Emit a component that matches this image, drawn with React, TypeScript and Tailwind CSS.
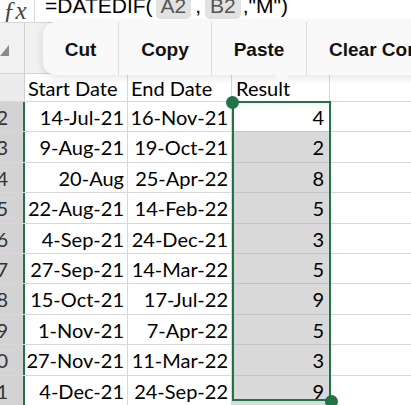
const rows = [
  { n: 2, start: "14-Jul-21", end: "16-Nov-21", result: 4 },
  { n: 3, start: "9-Aug-21", end: "19-Oct-21", result: 2 },
  { n: 4, start: "20-Aug", end: "25-Apr-22", result: 8 },
  { n: 5, start: "22-Aug-21", end: "14-Feb-22", result: 5 },
  { n: 6, start: "4-Sep-21", end: "24-Dec-21", result: 3 },
  { n: 7, start: "27-Sep-21", end: "14-Mar-22", result: 5 },
  { n: 8, start: "15-Oct-21", end: "17-Jul-22", result: 9 },
  { n: 9, start: "1-Nov-21", end: "7-Apr-22", result: 5 },
  { n: 10, start: "27-Nov-21", end: "11-Mar-22", result: 3 },
  { n: 11, start: "4-Dec-21", end: "24-Sep-22", result: 9 },
];

const menu = ["Cut", "Copy", "Paste", "Clear Contents"];

const cellFont = { fontFamily: "Lato, 'Open Sans', sans-serif" };

export default function App() {
  return (
    <div className="relative w-[411px] h-[405px] overflow-hidden bg-white text-black" style={cellFont}>
      {/* formula bar */}
      <div className="flex h-[23px] border-b border-[#d6d6d6] bg-white overflow-hidden">
        <div className="w-[35px] shrink-0 border-r border-[#d6d6d6] relative overflow-hidden">
          <span className="absolute left-[3px] top-[-8px] text-[25px] italic text-[#444]" style={{ fontFamily: "'Liberation Serif', serif" }}>
            ƒx
          </span>
        </div>
        <div className="flex items-start pl-[10px] -mt-[7px] text-[21px] leading-[26px] whitespace-nowrap" style={{ fontFamily: "'Liberation Sans', Arial, sans-serif" }}>
          <span>=DATEDIF(</span>
          <span className="ml-[3px] px-[5px] rounded-[5px] bg-[#e2e2e2] text-[#555]">A2</span>
          <span className="mx-[4px]">,</span>
          <span className="px-[5px] rounded-[5px] bg-[#e2e2e2] text-[#555]">B2</span>
          <span className="ml-[2px]">,"M")</span>
        </div>
      </div>

      {/* column letters row */}
      <div className="flex h-[51px] bg-[#f1f1f1] border-b border-[#d4d4d4]">
        <div className="w-[25px] shrink-0 border-r border-[#cfcfcf] relative">
          <div className="absolute left-0 top-[22px] w-0 h-0 border-l-[9px] border-l-transparent border-b-[11px] border-b-[#8a8a8a]" />
        </div>
        <div className="w-[103px] shrink-0 border-r border-[#d4d4d4]" />
        <div className="w-[104px] shrink-0 border-r border-[#d4d4d4]" />
        <div className="w-[98px] shrink-0 border-r border-[#d4d4d4]" />
        <div className="flex-1" />
      </div>

      {/* header row */}
      <div className="flex h-[28px] border-b border-[#d8d8d8] text-[20px] leading-[28px]">
        <div className="w-[25px] shrink-0 bg-[#ececec] border-r border-[#cfcfcf]" />
        <div className="w-[103px] shrink-0 border-r border-[#d8d8d8] pl-[3px]">Start Date</div>
        <div className="w-[104px] shrink-0 border-r border-[#d8d8d8] pl-[3px]">End Date</div>
        <div className="w-[98px] shrink-0 border-r border-[#d8d8d8] pl-[4px]">Result</div>
        <div className="flex-1" />
      </div>

      {/* data rows */}
      {rows.map((r, i) => (
        <div key={r.n} className="flex h-[30.4px] border-b border-[#d8d8d8] text-[20px] leading-[30px]">
          <div className="w-[25px] shrink-0 bg-[#d3d3d3] border-r-2 border-[#217346] flex justify-end pr-[15px] overflow-hidden text-[#333]">
            <span className="whitespace-nowrap">{r.n}</span>
          </div>
          <div className="w-[103px] shrink-0 border-r border-[#d8d8d8] text-right pr-[3px] whitespace-nowrap">{r.start}</div>
          <div className="w-[104px] shrink-0 border-r border-[#d8d8d8] text-right pr-[3px] whitespace-nowrap">{r.end}</div>
          <div
            className={
              i === 0
                ? "w-[98px] shrink-0 border-r border-[#d8d8d8] text-right pr-[5px] bg-white"
                : "w-[98px] shrink-0 border-r border-[#d8d8d8] text-right pr-[5px] bg-[#d9d9d9] border-t border-t-[#c4c4c4] -mt-px"
            }
          >
            {r.result}
          </div>
          <div className="flex-1" />
        </div>
      ))}

      {/* selection box on Result column */}
      <div className="absolute left-[232px] top-[101px] w-[99px] h-[300px] border-2 border-[#217346] pointer-events-none" />
      <div className="absolute left-[226px] top-[96px] w-[13px] h-[13px] rounded-full bg-[#217346]" />
      <div className="absolute left-[325px] top-[395px] w-[13px] h-[13px] rounded-full bg-[#217346]" />

      {/* context menu */}
      <div
        className="absolute left-[43px] top-[22px] w-[400px] h-[53px] rounded-[13px] bg-[#f9f9f9] shadow-[0_2px_10px_rgba(0,0,0,0.12)] flex text-[19px] font-bold text-[#111]"
        style={{ fontFamily: "'Liberation Sans', Arial, sans-serif" }}
      >
        {menu.map((m, i) => (
          <div
            key={m}
            className={
              i === 0
                ? "w-[76px] shrink-0 flex items-center justify-center pt-[4px] border-r border-[#dcdcdc]"
                : i === 1
                ? "w-[93px] shrink-0 flex items-center justify-center pt-[4px] border-r border-[#dcdcdc]"
                : i === 2
                ? "w-[95px] shrink-0 flex items-center justify-center pt-[4px] border-r border-[#dcdcdc]"
                : "flex-1 flex items-center pl-[22px] pt-[4px] whitespace-nowrap overflow-hidden"
            }
          >
            {m}
          </div>
        ))}
        <div className="absolute left-[230px] bottom-[-7px] w-0 h-0 border-l-[9px] border-l-transparent border-r-[9px] border-r-transparent border-t-[8px] border-t-[#f9f9f9]" />
      </div>
    </div>
  );
}
